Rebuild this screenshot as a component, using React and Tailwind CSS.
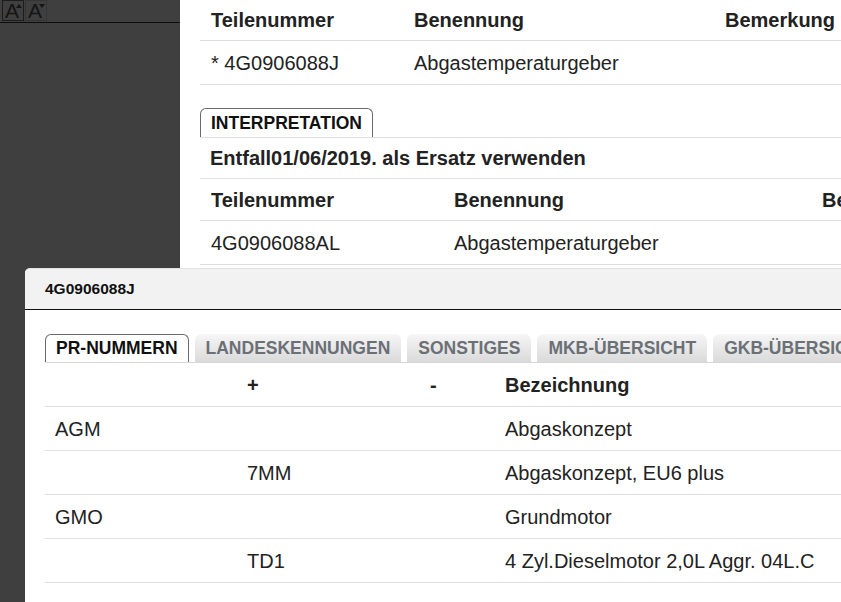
import React from 'react';

const font = { fontFamily: '"Liberation Sans", Arial, sans-serif' };

const FontButton = ({ up, active }) => (
  <div
    className={`relative h-[21px] w-[22px] ${
      active ? 'border border-[#1c1c1c]' : 'border border-[#353535]'
    }`}
  >
    <span className="absolute left-[2px] top-0 text-[21px] leading-[20px] text-[#151515]">A</span>
    <svg width="6" height="4" viewBox="0 0 6 4" className="absolute right-[1px] top-[3px]">
      {up ? <path d="M0 4 L3 0 L6 4 Z" fill="#151515" /> : <path d="M0 0 L3 4 L6 0 Z" fill="#151515" />}
    </svg>
  </div>
);

const Sidebar = () => (
  <div className="flex w-[180px] shrink-0 flex-col bg-[#3f3f3f]">
    <div className="flex h-[23px] items-start gap-[1px] border-b border-[#0d0d0d] pl-[2px]">
      <FontButton up active />
      <FontButton />
    </div>
  </div>
);

const PartTable = ({ cols, header, rows }) => (
  <div>
    <div className="flex h-[42px] items-center border-b border-[#dedede] font-bold">
      {header.map((h, i) => (
        <div key={i} className="shrink-0 whitespace-nowrap px-[11px]" style={{ width: cols[i] }}>
          {h}
        </div>
      ))}
    </div>
    {rows.map((r, ri) => (
      <div key={ri} className="flex h-[44px] items-center border-b border-[#dedede]">
        {r.map((c, i) => (
          <div key={i} className="shrink-0 whitespace-nowrap px-[11px]" style={{ width: cols[i] }}>
            {c}
          </div>
        ))}
      </div>
    ))}
  </div>
);

const Background = () => (
  <div className="flex-1 pl-[20px] text-[20px] text-[#222]">
    <div className="-mt-[1px]">
      <PartTable
        cols={[203, 311, 200]}
        header={['Teilenummer', 'Benennung', 'Bemerkung']}
        rows={[['* 4G0906088J', 'Abgastemperaturgeber', '']]}
      />
    </div>
    <div className="mt-[23px] flex border-b border-[#dedede]">
      <div className="flex h-[29px] w-[173px] items-center justify-center rounded-t-[6px] border border-b-0 border-[#6a6a6a] bg-white text-[17.5px] font-bold text-[#111]">
        INTERPRETATION
      </div>
    </div>
    <div className="flex h-[41px] items-center border-b border-[#dedede] px-[10px] font-bold">
      Entfall01/06/2019. als Ersatz verwenden
    </div>
    <PartTable
      cols={[243, 368, 200]}
      header={['Teilenummer', 'Benennung', 'Bemerkung']}
      rows={[['4G0906088AL', 'Abgastemperaturgeber', '']]}
    />
  </div>
);

const tabs = ['PR-NUMMERN', 'LANDESKENNUNGEN', 'SONSTIGES', 'MKB-ÜBERSICHT', 'GKB-ÜBERSICHT'];

const prRows = [
  ['AGM', '', '', 'Abgaskonzept'],
  ['', '7MM', '', 'Abgaskonzept, EU6 plus'],
  ['GMO', '', '', 'Grundmotor'],
  ['', 'TD1', '', '4 Zyl.Dieselmotor 2,0L Aggr. 04L.C'],
];

const Modal = () => (
  <div className="absolute bottom-0 left-[25px] top-[268px] w-[900px] overflow-hidden rounded-tl-[5px] border-t border-[#e2e2e2] bg-white text-[#222]">
    <div className="flex h-[41px] items-center border-b border-[#111] bg-[#f2f2f2] pl-[20px] text-[15.5px] font-bold text-[#111]">
      4G0906088J
    </div>
    <div className="px-[20px] pt-[24px]">
      <div className="flex gap-[6px] border-b border-[#d6d6d6]">
        {tabs.map((t, i) =>
          i === 0 ? (
            <div
              key={t}
              className="flex h-[28px] items-center rounded-t-[6px] border border-b-0 border-[#6a6a6a] bg-white px-[10px] text-[17.5px] font-bold text-[#111]"
            >
              {t}
            </div>
          ) : (
            <div
              key={t}
              className="flex h-[28px] items-center whitespace-nowrap rounded-t-[6px] bg-gradient-to-b from-[#f6f6f6] to-[#dadada] px-[11px] text-[17.5px] font-bold text-[#6b7076]"
            >
              {t}
            </div>
          )
        )}
      </div>
      <div className="text-[20px]">
        <div className="grid h-[44px] grid-cols-[192px_183px_75px_1fr] items-center border-b border-[#dedede] font-bold">
          <div className="px-[10px]"></div>
          <div className="px-[10px]">+</div>
          <div className="px-[10px]">-</div>
          <div className="px-[10px]">Bezeichnung</div>
        </div>
        {prRows.map((r, ri) => (
          <div
            key={ri}
            className="grid h-[44px] grid-cols-[192px_183px_75px_1fr] items-center border-b border-[#dedede]"
          >
            {r.map((c, i) => (
              <div key={i} className="whitespace-nowrap px-[10px]">
                {c}
              </div>
            ))}
          </div>
        ))}
      </div>
    </div>
  </div>
);

export default function App() {
  return (
    <div className="relative flex h-[602px] w-[841px] overflow-hidden bg-white" style={font}>
      <Sidebar />
      <Background />
      <Modal />
    </div>
  );
}
